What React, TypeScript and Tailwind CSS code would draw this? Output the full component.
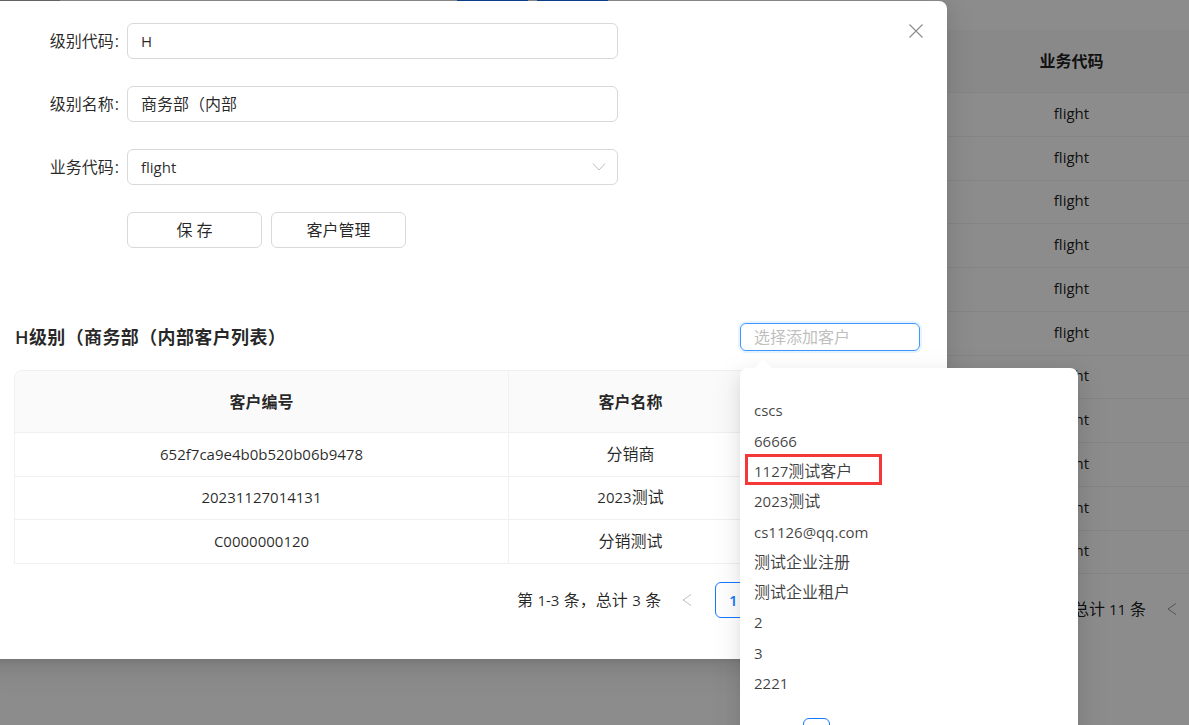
const font = "font-['Open_Sans','Noto_Sans_CJK_SC',sans-serif]";

const popShadow =
  "shadow-[0_6px_16px_0_rgba(0,0,0,0.08),0_3px_6px_-4px_rgba(0,0,0,0.12),0_9px_28px_8px_rgba(0,0,0,0.05)]";

// Latin runs are set a size down so their widths match the reference's narrower Latin face.
function T({ s }: { s: string }) {
  const parts = s.split(/([\x00-\x7f]+)/).filter(Boolean);
  return (
    <span>
      {parts.map((p, i) =>
        /^[\x00-\x7f]+$/.test(p) ? (
          <span key={i} className="text-[15px]">{p}</span>
        ) : (
          <span key={i}>{p}</span>
        )
      )}
    </span>
  );
}

function Chevron({ className }: { className?: string }) {
  return (
    <svg viewBox="0 0 12 12" className={className} fill="none" stroke="currentColor" strokeWidth="1">
      <path d="M10 0.5 L2 6 L10 11.5" />
    </svg>
  );
}

function Field({ label, value, select }: { label: string; value: string; select?: boolean }) {
  return (
    <div className="flex items-center h-9 mb-[27px]">
      <div className="w-[127px] pr-[8px] text-right text-[16px] text-black/85">
        {label}
        <span className="ml-[1px]">:</span>
      </div>
      <div className="w-[491px] h-9 border border-[#d9d9d9] rounded-[6px] bg-white flex items-center justify-between pl-[13px] pr-[11px] text-[16px] text-black/85">
        <T s={value} />
        {select && (
          <svg viewBox="0 0 14 14" className="w-[14px] h-[14px] text-[#bfbfbf]" fill="none" stroke="currentColor" strokeWidth="1">
            <path d="M1 3.5 L7 10 L13 3.5" />
          </svg>
        )}
      </div>
    </div>
  );
}

function Btn({ children }: { children: React.ReactNode }) {
  return (
    <button className="w-[135px] h-9 border border-[#d9d9d9] rounded-[6px] bg-white text-[16px] text-black/85">
      {children}
    </button>
  );
}

const bgRows = Array.from({ length: 11 });
const rows = [
  ["652f7ca9e4b0b520b06b9478", "分销商", "h-[44px]"],
  ["20231127014131", "2023测试", "h-[43px]"],
  ["C0000000120", "分销测试", "h-[43px]"],
];
const items = ["cscs", "66666", "1127测试客户", "2023测试", "cs1126@qq.com", "测试企业注册", "测试企业租户", "2", "3", "2221"];

export default function App() {
  return (
    <div className={`relative w-[1189px] h-[725px] overflow-hidden bg-white ${font}`}>
      {/* page behind the mask */}
      <div className="flex flex-col">
        <div className="flex h-px">
          <div className="w-[60px] bg-[#bbbbbb]" />
          <div className="ml-[397px] w-[71px] bg-[#1677ff]" />
          <div className="ml-[9px] w-[71px] bg-[#1677ff]" />
        </div>
        <div className="mt-[29px] flex justify-end h-[63px] bg-[#fafafa] border-b border-[#f0f0f0]">
          <div className="w-[235px] flex items-center justify-center text-[16px] font-semibold text-black/90">业务代码</div>
        </div>
        {bgRows.map((_, i) => (
          <div key={i} className="flex justify-end h-[43.75px] border-b border-[#f0f0f0]">
            <div className="w-[235px] pb-[3px] flex items-center justify-center text-[16px] text-black/90">
              <T s="flight" />
            </div>
          </div>
        ))}
        <div className="flex justify-end items-center h-[70px] text-[16px] text-black/90">
          <T s="第 1-10 条，总计 11 条" />
          <Chevron className="w-3 h-3 ml-[20px] mr-[11px] text-black/40" />
        </div>
      </div>

      {/* mask */}
      <div className="absolute inset-0 bg-black/45" />

      {/* modal */}
      <div className="absolute left-[-20px] top-[1px] w-[967px] h-[658px] bg-white rounded-[8px] shadow-[0_6px_16px_0_rgba(0,0,0,0.08),0_3px_6px_-4px_rgba(0,0,0,0.12),0_9px_28px_8px_rgba(0,0,0,0.05)]">
        <div className="pl-[20px] flex flex-col">
          <div className="pt-[22px]">
            <Field label="级别代码" value="H" />
            <Field label="级别名称" value="商务部（内部" />
            <Field label="业务代码" value="flight" select />
            <div className="flex gap-[9px] pl-[127px]">
              <Btn>保 存</Btn>
              <Btn>客户管理</Btn>
            </div>
          </div>

          <div className="mt-[75px] pl-[15px] w-[920px] flex items-center justify-between h-7">
            <div className="text-[18px] tracking-[0.38px] font-semibold text-black/85">H级别（商务部（内部客户列表）</div>
            <div className="w-[180px] h-7 border border-[#4096ff] rounded-[6px] shadow-[0_0_0_2px_rgba(5,145,255,0.1)] pl-[13px] flex items-center text-[16px] text-[#bfbfbf]">
              选择添加客户
            </div>
          </div>

          <div className="ml-[14px] mt-[19px] w-[906px] border border-[#f0f0f0] rounded-t-[8px] text-[16px] text-black/85">
            <div className="flex h-[62px] bg-[#fafafa] border-b border-[#f0f0f0] font-semibold rounded-t-[8px]">
              <div className="w-[494px] border-r border-[#f0f0f0] flex items-center justify-center">客户编号</div>
              <div className="w-[244px] border-r border-[#f0f0f0] flex items-center justify-center">客户名称</div>
              <div className="flex-1" />
            </div>
            {rows.map((r, i) => (
              <div key={r[0]} className={`flex ${r[2]} ${i < 2 ? "border-b border-[#f0f0f0]" : ""}`}>
                <div className="w-[494px] pb-[2px] border-r border-[#f0f0f0] flex items-center justify-center">
                  <T s={r[0]} />
                </div>
                <div className="w-[244px] pb-[2px] border-r border-[#f0f0f0] flex items-center justify-center">
                  <T s={r[1]} />
                </div>
                <div className="flex-1" />
              </div>
            ))}
          </div>

          <div className="mt-[18px] pl-[517px] flex items-center h-9 text-[16px] text-black/85">
            <div className="[word-spacing:0.5px]">
              <T s="第 1-3 条，总计 3 条" />
            </div>
            <Chevron className="w-3 h-3 ml-[20px] text-black/25" />
            <div className="ml-[22px] w-9 h-9 border border-[#1677ff] rounded-[6px] text-[#1677ff] font-semibold flex items-center justify-center">
              <T s="1" />
            </div>
          </div>
        </div>

        <button className="absolute left-[928px] top-[22px] text-black/45">
          <svg viewBox="0 0 16 16" className="w-4 h-4" fill="none" stroke="currentColor" strokeWidth="1.2">
            <path d="M1.5 1.5 L14.5 14.5 M14.5 1.5 L1.5 14.5" />
          </svg>
        </button>
      </div>

      {/* popover */}
      <div className={`absolute left-[740px] top-[368px] w-[338px] h-[400px] bg-white rounded-[8px] ${popShadow} pl-[14px] pt-[27.4px]`}>
        <div className="absolute left-[17px] top-[-6px] w-3 h-3 bg-white rotate-45" />
        <div className="flex flex-col text-[16px] text-black/75">
          {items.map((t) => (
            <div key={t} className="h-[30.3px] leading-[30px]">
              <T s={t} />
            </div>
          ))}
        </div>
        <div className="mt-[19.3px] ml-[49px] w-[27px] h-9 border border-[#1677ff] rounded-[6px]" />
      </div>

      {/* red annotation */}
      <div className="absolute left-[745px] top-[454px] w-[137px] h-[31px] border-[3px] border-[#f43838]" />
    </div>
  );
}
